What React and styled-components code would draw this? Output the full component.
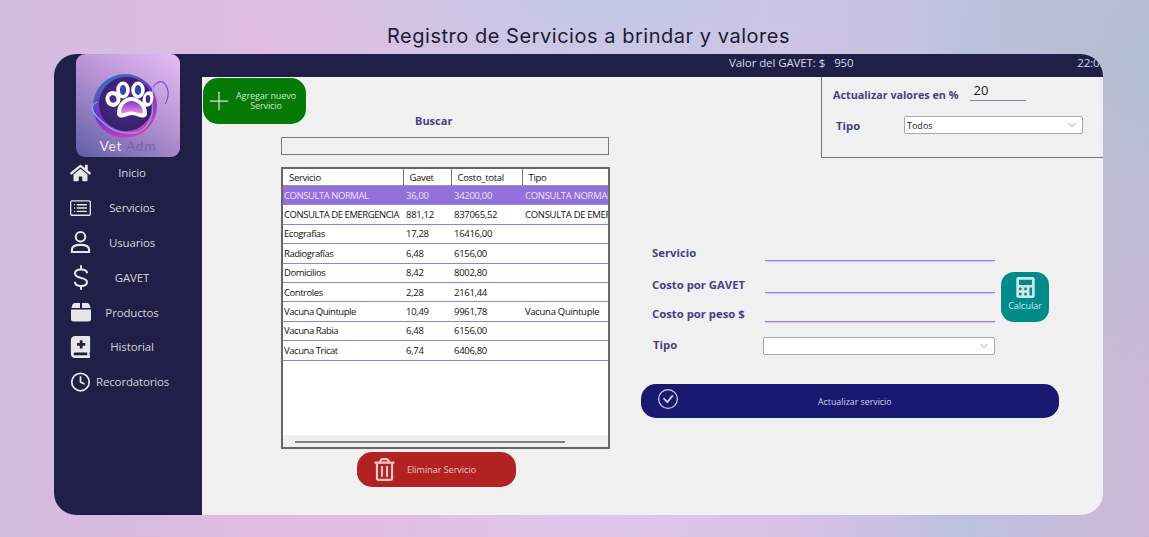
import styled, { createGlobalStyle } from "styled-components";
import { FaHome, FaBookMedical, FaRegTrashAlt, FaCalculator } from "react-icons/fa";
import { BsCardList, BsCheckCircle } from "react-icons/bs";
import { Plus, ChevronDown, Clock as ClockIcon } from "lucide-react";

const GlobalStyle = createGlobalStyle`
  html, body {
    margin: 0;
    height: 100%;
  }
  body {
    font-family: "Open Sans", "Liberation Sans", sans-serif;
    overflow: hidden;
  }
`;

const Page = styled.div`
  width: 1149px;
  height: 537px;
  box-sizing: border-box;
  padding: 0 46px 22px 54px;
  display: flex;
  flex-direction: column;
  background:
    radial-gradient(ellipse 220px 330px at 1149px 60px, #b2bfd2 0%, rgba(178, 191, 210, 0) 100%),
    radial-gradient(ellipse 380px 130px at 620px 0, #bfc8e4 0%, rgba(191, 200, 228, 0) 100%),
    linear-gradient(90deg, #d3bbe0 0%, #e3bce2 28%, #dec5e9 50%, #dac1e6 68%, #bcc1e0 84%, #cdb8d6 100%);
`;

const Title = styled.h1`
  margin: 0;
  height: 54px;
  line-height: 72px;
  padding-left: 20px;
  text-align: center;
  font-family: "Inter", sans-serif;
  font-size: 20px;
  font-weight: 400;
  letter-spacing: 0.53px;
  color: #1c1c34;
  white-space: nowrap;
`;

const Window = styled.div`
  flex: 1;
  display: flex;
  border-radius: 22px;
  overflow: hidden;
  background: #f0f0f0;
`;

const Sidebar = styled.aside`
  width: 148px;
  flex: none;
  background: #1f1f47;
  display: flex;
  flex-direction: column;
`;

const Logo = styled.div`
  width: 104px;
  height: 103px;
  margin: 0 0 0 22px;
  border-radius: 9px;
  background: linear-gradient(215deg, #e5bdf4 0%, #b491d2 48%, #5d5ea6 100%);
  display: flex;
  flex-direction: column;
  align-items: center;
  overflow: hidden;
`;

const LogoMark = styled.svg`
  width: 84px;
  height: 76px;
  margin-top: 7px;
  flex: none;
  overflow: visible;
`;

const LogoText = styled.div`
  position: relative;
  font-family: "Lato", sans-serif;
  font-size: 14px;
  line-height: 18px;
  letter-spacing: 0.6px;
  color: #ece6f4;
  span {
    color: #7565a8;
  }
`;

const Nav = styled.nav`
  display: flex;
  flex-direction: column;
  margin-top: -1.5px;
`;

const NavItem = styled.a`
  height: 34.8px;
  display: grid;
  grid-template-columns: 26px 72px;
  align-items: center;
  padding-left: 16px;
  color: #d4d4dc;
  font-size: 11.5px;
`;

const NavIcon = styled.span`
  display: flex;
  width: 21px;
  justify-content: center;
  color: #e6e6e6;
`;

const NavLabel = styled.span`
  text-align: center;
  white-space: nowrap;
  letter-spacing: -0.15px;
`;

const Main = styled.main`
  flex: 1;
  min-width: 0;
  display: flex;
  flex-direction: column;
`;

const TopBar = styled.header`
  height: 23px;
  flex: none;
  background: #1f1f47;
  color: #d8d8e0;
  font-size: 11.5px;
  letter-spacing: -0.1px;
  display: flex;
  align-items: center;
  padding-bottom: 7px;
  box-sizing: border-box;
  padding-left: 527px;
  overflow: hidden;
`;

const GavetValue = styled.span`
  margin-left: 9px;
`;

const Clock = styled.span`
  margin-left: auto;
  margin-right: -3px;
  white-space: nowrap;
`;

const Body = styled.div`
  flex: 1;
  display: flex;
  min-height: 0;
`;

const LeftCol = styled.section`
  width: 419px;
  flex: none;
  display: flex;
  flex-direction: column;
  align-items: flex-start;
`;

const RightCol = styled.section`
  flex: 1;
  min-width: 0;
  display: flex;
  flex-direction: column;
`;

const AddButton = styled.button`
  width: 103px;
  height: 46px;
  margin: 1px 0 0 1px;
  border: 0;
  border-radius: 15px;
  background: #067a06;
  color: #cfe3cf;
  font: inherit;
  font-size: 9px;
  line-height: 10.5px;
  display: flex;
  align-items: center;
  padding: 0 0 0 1px;
  span {
    width: 68px;
    text-align: center;
    margin-left: -2px;
    letter-spacing: -0.1px;
    flex: none;
  }
  svg {
    flex: none;
  }
`;

const SearchLabel = styled.label`
  margin: -12px 0 0 213px;
  height: 18px;
  line-height: 18px;
  font-size: 11px;
  font-weight: 700;
  color: #483d8b;
`;

const SearchBox = styled.input`
  width: 328px;
  height: 18px;
  box-sizing: border-box;
  margin: 7px 0 0 79px;
  border: 1px solid #7a7a7a;
  background: #f0f0f0;
  outline: 0;
`;

const TableWrap = styled.div`
  width: 329px;
  height: 282px;
  box-sizing: border-box;
  margin: 12px 0 0 79px;
  border: 2px solid #666;
  background: #fff;
  display: flex;
  flex-direction: column;
  overflow: hidden;
`;

const Table = styled.table`
  width: 325px;
  flex: none;
  table-layout: fixed;
  border-collapse: collapse;
  font-size: 9.5px;
  letter-spacing: -0.3px;
  color: #111;
  th,
  td {
    padding: 0 0 0 3px;
    text-align: left;
    white-space: nowrap;
    overflow: hidden;
    font-weight: 400;
  }
  th {
    height: 16px;
    padding-left: 6px;
    border-right: 1px solid #777;
    border-bottom: 1px solid #999;
  }
  th:last-child {
    border-right: 0;
  }
  td {
    height: 18.4px;
    border-bottom: 1.5px solid #8f83e0;
  }
  td:first-child {
    padding-left: 1px;
    letter-spacing: -0.45px;
  }
`;

const Row = styled.tr`
  background: ${(p) => (p.$selected ? "#9370db" : "#fff")};
  color: ${(p) => (p.$selected ? "#e9e2f8" : "#111")};
`;

const TableFill = styled.div`
  flex: 1;
`;

const ScrollTrack = styled.div`
  height: 11px;
  flex: none;
  background: #f0f0f0;
  display: flex;
  align-items: center;
  padding: 1px 0 0 12px;
`;

const ScrollThumb = styled.div`
  width: 270px;
  height: 2px;
  background: #7d7d7d;
`;

const DeleteButton = styled.button`
  width: 159px;
  height: 35px;
  margin: 3px 0 0 155px;
  border: 0;
  border-radius: 15px;
  background: #b22222;
  color: #e8c8c8;
  font: inherit;
  font-size: 9px;
  display: flex;
  align-items: center;
  padding: 0 0 0 16px;
  span {
    margin-left: 11px;
  }
`;

const RatePanel = styled.div`
  align-self: flex-end;
  width: 282px;
  height: 81px;
  box-sizing: border-box;
  flex: none;
  border-left: 1px solid #777;
  border-bottom: 1px solid #777;
  padding: 5px 0 0 11px;
`;

const RateRow = styled.div`
  display: flex;
  align-items: center;
  height: 20px;
`;

const Label = styled.label`
  font-size: 11.3px;
  font-weight: 700;
  color: #483d8b;
  white-space: nowrap;
`;

const RateLabel = styled(Label)`
  font-size: 10.8px;
  padding-top: 4px;
`;

const RateInput = styled.div`
  width: 56px;
  height: 18px;
  margin-left: 11px;
  border-bottom: 1px solid #9370db;
  font-size: 13px;
  line-height: 15px;
  color: #222;
  padding-left: 4px;
  box-sizing: border-box;
`;

const TypeRow = styled.div`
  display: grid;
  grid-template-columns: 68px 179px;
  align-items: center;
  margin: 14px 0 0 3px;
`;

const Select = styled.div`
  height: 18px;
  box-sizing: border-box;
  background: #fff;
  border: 1px solid #a8a8a8;
  border-radius: 2px;
  display: flex;
  align-items: center;
  justify-content: space-between;
  padding: 0 4px 0 2px;
  font-size: 9px;
  color: #222;
  svg {
    color: #555;
  }
`;

const FieldSelect = styled(Select)`
  width: 232px;
  margin: 1px 0 0 -2px;
`;

const EditArea = styled.div`
  margin-top: 86px;
  padding-left: 21px;
  display: flex;
  flex-direction: column;
`;

const FieldsWrap = styled.div`
  display: flex;
  align-items: flex-end;
`;

const Fields = styled.div`
  width: 354px;
  display: flex;
  flex-direction: column;
  padding-left: 10px;
`;

const Field = styled.div`
  display: grid;
  grid-template-columns: 113px 230px;
  align-items: start;
  height: ${(p) => p.$h}px;
`;

const FieldLabel = styled(Label)`
  line-height: 18px;
  padding-left: ${(p) => p.$indent || 0}px;
`;

const FieldLine = styled.div`
  height: 16px;
  border-bottom: 1px solid #a080e0;
  box-shadow: 0 1px 0 #d5c8f0;
`;

const CalcButton = styled.button`
  width: 48px;
  height: 50px;
  border: 0;
  border-radius: 13px;
  background: #008b8b;
  color: #cfe6e6;
  font: inherit;
  font-size: 9px;
  display: flex;
  flex-direction: column;
  align-items: center;
  padding: 5px 0 0;
  margin: 0 0 33px -5px;
  span {
    margin-top: 1px;
  }
`;

const UpdateButton = styled.button`
  width: 418px;
  height: 34px;
  margin: 29px 0 0 -1px;
  border: 0;
  border-radius: 15px;
  background: #191970;
  color: #cfcfe4;
  font: inherit;
  font-size: 8.8px;
  display: flex;
  align-items: center;
  padding: 2px 0 0 17px;
  span {
    margin-left: 140px;
  }
  svg {
    margin-top: -7px;
  }
`;

function UserIcon() {
  return (
    <svg width="22" height="24" viewBox="0 0 22 24" fill="none" stroke="#e6e6e6" strokeWidth="2.2">
      <circle cx="11" cy="6.500" r="5" />
      <path d="M2 22.500v-2.500c0-3 3.500-5 9-5s9 2 9 5v2.500z" />
    </svg>
  );
}

function DollarIcon() {
  return (
    <svg width="16" height="25" viewBox="0 0 16 25" fill="none" stroke="#e6e6e6" strokeWidth="2" strokeLinecap="round">
      <path d="M8 1v3M8 21v3" />
      <path d="M14 7.500C13.500 5.500 11 4.500 8 4.500c-3.500 0-6 1.500-6 4 0 6 12 3 12 8.500 0 2.500-2.500 4-6 4-3.200 0-5.500-1.200-6-3.500" />
    </svg>
  );
}

function BoxIcon() {
  return (
    <svg width="20" height="20" viewBox="0 0 20 20" fill="#e6e6e6">
      <path d="M4 1h5v5H0.3L1.6 2.600C2 1.600 3 1 4 1z" />
      <path d="M11 1h5c1 0 2 .6 2.400 1.600L19.700 6H11z" />
      <path d="M0 7.500h20V17a2.500 2.500 0 0 1-2.500 2.500h-15A2.500 2.500 0 0 1 0 17z" />
    </svg>
  );
}

function PawLogo() {
  return (
    <LogoMark viewBox="0 0 84 76">
      <defs>
        <linearGradient id="ring" x1="0.2" y1="0" x2="0.75" y2="1">
          <stop offset="0" stopColor="#2f78c0" />
          <stop offset="0.45" stopColor="#7a2fc8" />
          <stop offset="1" stopColor="#de3fb8" />
        </linearGradient>
        <radialGradient id="core" cx="0.5" cy="0.45" r="0.55">
          <stop offset="0" stopColor="#5a2a98" />
          <stop offset="1" stopColor="#33206a" />
        </radialGradient>
        <linearGradient id="pad" x1="0" y1="0" x2="0" y2="1">
          <stop offset="0" stopColor="#7e38c8" />
          <stop offset="1" stopColor="#ec90e4" />
        </linearGradient>
      </defs>
      <circle cx="39" cy="45" r="32" fill="url(#ring)" />
      <circle cx="40" cy="43" r="27" fill="url(#core)" />
      <path d="M11 41 C6 43 5 47 7 50 C9 55 14 59 20 64 C28 71 42 74 52 71 C60 68 65 60 66 53 C67 46 65 38 67 26" fill="none" stroke="#58c6ea" strokeWidth="1.2" />
      <path d="M67 26 C70 22 74 20 77 21 C81 24 83 30 82 35 C81 40 80 42 79 43" fill="none" stroke="#7d49c4" strokeWidth="1.1" />
      <g fill="#fff">
        <ellipse cx="27" cy="38" rx="7.500" ry="8" transform="rotate(-15 27 38)" />
        <ellipse cx="37" cy="29" rx="6.800" ry="8.500" />
        <ellipse cx="52" cy="29" rx="6.800" ry="8.500" />
        <ellipse cx="62" cy="38" rx="5.300" ry="8" transform="rotate(15 62 38)" />
        <path d="M31 52 C31 43 38 36 45 36 C53 36 61 43 61 52 C61 57 56 57.500 52 55.500 C48 53.500 44 53.500 40 55.500 C36 57.500 31 57 31 52z" />
      </g>
      <ellipse cx="27" cy="38" rx="3.500" ry="3.800" fill="#4a2a90" transform="rotate(-15 27 38)" />
      <ellipse cx="37" cy="29" rx="3.200" ry="5" fill="#2c4aa8" />
      <ellipse cx="52" cy="29" rx="3.200" ry="5" fill="#2c4aa8" />
      <ellipse cx="62" cy="38" rx="2.300" ry="4" fill="#4a2a90" />
      <path d="M35 51 C35 45 40 40 45.500 40 C51 40 57 45 57 51 C57 53 54 53 51 51.500 C47.500 50 43.500 50 40 51.500 C37.500 53 35 53 35 51z" fill="url(#pad)" />
    </LogoMark>
  );
}

const navItems = [
  { label: "Inicio", icon: <FaHome size={22} /> },
  { label: "Servicios", icon: <BsCardList size={22} /> },
  { label: "Usuarios", icon: <UserIcon /> },
  { label: "GAVET", icon: <DollarIcon /> },
  { label: "Productos", icon: <BoxIcon /> },
  { label: "Historial", icon: <FaBookMedical size={22} /> },
  { label: "Recordatorios", icon: <ClockIcon size={24} strokeWidth={2} /> },
];

const services = [
  ["CONSULTA NORMAL", "36,00", "34200,00", "CONSULTA NORMAL"],
  ["CONSULTA DE EMERGENCIA", "881,12", "837065,52", "CONSULTA DE EMERGENCIA"],
  ["Ecografías", "17,28", "16416,00", ""],
  ["Radiografías", "6,48", "6156,00", ""],
  ["Domicilios", "8,42", "8002,80", ""],
  ["Controles", "2,28", "2161,44", ""],
  ["Vacuna Quintuple", "10,49", "9961,78", "Vacuna Quintuple"],
  ["Vacuna Rabia", "6,48", "6156,00", ""],
  ["Vacuna Tricat", "6,74", "6406,80", ""],
];

export default function App() {
  return (
    <Page>
      <GlobalStyle />
      <Title>Registro de Servicios a brindar y valores</Title>
      <Window>
        <Sidebar>
          <Logo>
            <PawLogo />
            <LogoText>
              Vet <span>Adm</span>
            </LogoText>
          </Logo>
          <Nav>
            {navItems.map((item) => (
              <NavItem key={item.label}>
                <NavIcon>{item.icon}</NavIcon>
                <NavLabel>{item.label}</NavLabel>
              </NavItem>
            ))}
          </Nav>
        </Sidebar>
        <Main>
          <TopBar>
            Valor del GAVET: $<GavetValue>950</GavetValue>
            <Clock>22:05</Clock>
          </TopBar>
          <Body>
            <LeftCol>
              <AddButton>
                <Plus size={30} strokeWidth={1} />
                <span>Agregar nuevo Servicio</span>
              </AddButton>
              <SearchLabel>Buscar</SearchLabel>
              <SearchBox />
              <TableWrap>
                <Table>
                  <colgroup>
                    <col style={{ width: 120 }} />
                    <col style={{ width: 48 }} />
                    <col style={{ width: 71 }} />
                    <col style={{ width: 86 }} />
                  </colgroup>
                  <thead>
                    <tr>
                      <th>Servicio</th>
                      <th>Gavet</th>
                      <th>Costo_total</th>
                      <th>Tipo</th>
                    </tr>
                  </thead>
                  <tbody>
                    {services.map((s, i) => (
                      <Row key={s[0]} $selected={i === 0}>
                        {s.map((v, j) => (
                          <td key={j}>{v}</td>
                        ))}
                      </Row>
                    ))}
                  </tbody>
                </Table>
                <TableFill />
                <ScrollTrack>
                  <ScrollThumb />
                </ScrollTrack>
              </TableWrap>
              <DeleteButton>
                <FaRegTrashAlt size={23} />
                <span>Eliminar Servicio</span>
              </DeleteButton>
            </LeftCol>
            <RightCol>
              <RatePanel>
                <RateRow>
                  <RateLabel>Actualizar valores en %</RateLabel>
                  <RateInput>20</RateInput>
                </RateRow>
                <TypeRow>
                  <Label>Tipo</Label>
                  <Select>
                    Todos
                    <ChevronDown size={12} strokeWidth={1.2} />
                  </Select>
                </TypeRow>
              </RatePanel>
              <EditArea>
                <FieldsWrap>
                  <Fields>
                    <Field $h={32}>
                      <FieldLabel>Servicio</FieldLabel>
                      <FieldLine />
                    </Field>
                    <Field $h={29}>
                      <FieldLabel>Costo por GAVET</FieldLabel>
                      <FieldLine />
                    </Field>
                    <Field $h={31}>
                      <FieldLabel>Costo por peso $</FieldLabel>
                      <FieldLine />
                    </Field>
                    <Field $h={19}>
                      <FieldLabel $indent={1}>Tipo</FieldLabel>
                      <FieldSelect>
                        <span />
                        <ChevronDown size={12} strokeWidth={1.2} />
                      </FieldSelect>
                    </Field>
                  </Fields>
                  <CalcButton>
                    <FaCalculator size={21} />
                    <span>Calcular</span>
                  </CalcButton>
                </FieldsWrap>
                <UpdateButton>
                  <BsCheckCircle size={20} />
                  <span>Actualizar servicio</span>
                </UpdateButton>
              </EditArea>
            </RightCol>
          </Body>
        </Main>
      </Window>
    </Page>
  );
}
